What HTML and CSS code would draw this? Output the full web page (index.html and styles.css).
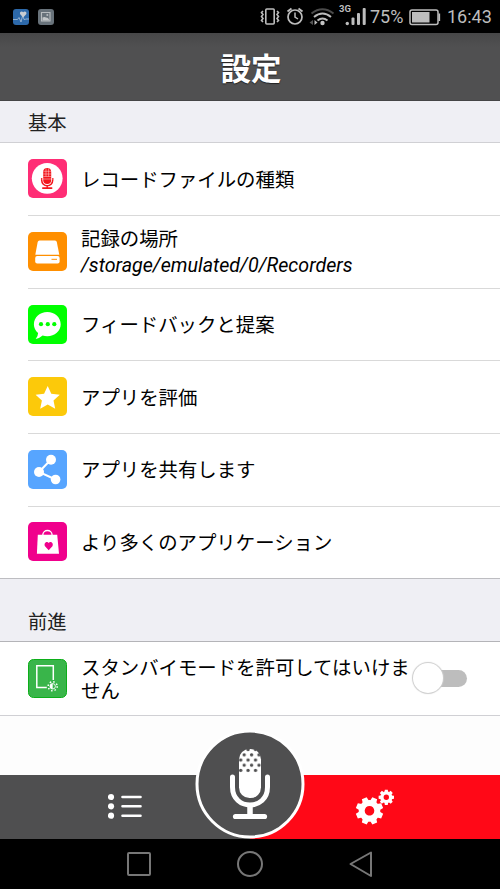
FILE: index.html
```html
<!DOCTYPE html>
<html lang="ja">
<head>
<meta charset="utf-8">
<title>設定</title>
<link rel="stylesheet" href="styles.css">
</head>
<body>
<div class="screen">
  <div class="status">
    <svg class="status-art" width="500" height="33" viewBox="0 0 500 33">
      <rect x="13" y="9" width="16" height="16" rx="3" fill="#2d69aa"/>
      <path d="M13 19.500h4.500l1.500-2 2 4.500 1.500-6 2 4 1-1h3.500" fill="none" stroke="#9fb9d5" stroke-width=".9"/>
      <path d="M23.200 17.500l-3-3.200c-1.200-2.300 1.700-4 3-2 1.300-2 4.300-.3 3 2z" fill="#c8cdd2"/>
      <rect x="38" y="9" width="16" height="16" rx="3" fill="#68727a"/>
      <path d="M41.500 12.500h8.500v8.500h-8.500z" fill="none" stroke="#b9bdc0" stroke-width="1.100"/>
      <path d="M42.500 20.500v-3l2-.5 1.500.5 2 .5 1.500 2.500z" fill="#c4c7c9"/>
      <circle cx="47.300" cy="15" r="1" fill="#b9bdc0"/>
      <g fill="none" stroke="#bdbdbd">
        <rect x="265.800" y="9" width="8.400" height="15" rx="1" stroke-width="1.600"/>
        <path d="M263 11l-1.500 1.500 1.500 2-1.500 2 1.500 2-1.500 2 1.500 1.500M277 11l1.500 1.500-1.500 2 1.500 2-1.500 2 1.500 2-1.500 1.500" stroke-width="1.600"/>
        <circle cx="295" cy="17" r="7" stroke-width="1.700"/>
        <path d="M295 12.500V17l3 2" stroke-width="1.500"/>
        <path d="M287.500 11.500l4-3M302.500 11.500l-4-3" stroke-width="1.800"/>
        <path d="M311.500 13.500q11-8.500 22 0" stroke="#4b4b4b" stroke-width="2"/>
        <path d="M314 17q8.500-7 17 0" stroke-width="2"/>
        <path d="M317.500 20.500q5-4 10 0" stroke-width="2"/>
      </g>
      <circle cx="322.500" cy="23" r="2.200" fill="#c4c4c4"/>
      <path d="M313 20v5l-3.500-2.500z" fill="#555"/><path d="M314.500 20v5l3-2.500z" fill="#bdbdbd"/>
      <g fill="#bdbdbd"><circle cx="347.300" cy="23.500" r="1.700"/><rect x="351.500" y="17.500" width="3" height="7.500" rx="1"/><rect x="357" y="13" width="3" height="12" rx="1"/><rect x="362.700" y="8" width="3" height="17" rx="1"/></g>
      <rect x="410" y="10" width="28" height="14.500" rx="2" fill="none" stroke="#bdbdbd" stroke-width="1.500"/>
      <rect x="412" y="12" width="17.500" height="10.500" fill="#bdbdbd"/>
      <path d="M439.300 13.500v7.500" stroke="#bdbdbd" stroke-width="1.700"/>
    </svg>
    <span class="net">3G</span><span class="percent">75%</span><span class="clock">16:43</span>
  </div>
  <header class="header">設定</header>
  <h2 class="section">基本</h2>
  <ul class="list">
    <li class="row">
      <svg class="icon" viewBox="0 0 39 39"><rect width="39" height="39" rx="5" fill="#ff2d75"/><circle cx="19.200" cy="19.300" r="15.400" fill="#fff"/><g fill="#f3161c"><rect x="15.200" y="9" width="8" height="16" rx="4"/><rect x="14" y="28.200" width="10.500" height="1.800" rx=".9"/></g><path d="M13.700 19v2.300a5.500 5.500 0 0 0 11 0V19M19.200 26.500v2.500" fill="none" stroke="#f3161c" stroke-width="1.500"/><path d="M15.500 12.300h7.500M15.300 15h8M15.300 17.500h8M13.500 20h11.500M18 9.500v8M20.600 9.500v8" stroke="#fff" stroke-opacity=".6" stroke-width=".7"/></svg>
      <span class="label">レコードファイルの種類</span>
    </li>
    <li class="row">
      <svg class="icon" viewBox="0 0 39 39"><rect width="39" height="39" rx="5" fill="#ff8f00"/><path d="M11.500 8.500h15.500q1.500 0 1.800 1.500l2.500 12.700h-24L9.700 10q.3-1.500 1.800-1.500z" fill="#fff"/><rect x="7.200" y="24" width="24.400" height="7.500" rx="2" fill="#fff"/><path d="M23.500 27.300h5.500" stroke="#ff8f00"/></svg>
      <span class="label two">記録の場所<br><i class="path">/storage/emulated/0/Recorders</i></span>
    </li>
    <li class="row">
      <svg class="icon" viewBox="0 0 39 39"><rect width="39" height="39" rx="5" fill="#0f0"/><path d="M19.300 7c7.500 0 13.400 5.300 13.400 12.200s-6 12-13.400 12c-1.800 0-3.200-.2-4.700-.7Q11.500 33.300 7.700 34q2.200-2.300 2.400-6C7.400 25.800 5.900 22.500 5.900 19.200 5.900 12.300 11.900 7 19.300 7z" fill="#fff"/><g fill="#0f0"><circle cx="13" cy="19.200" r="2.100"/><circle cx="19.800" cy="19.200" r="2.100"/><circle cx="26.300" cy="19.200" r="2.100"/></g></svg>
      <span class="label">フィードバックと提案</span>
    </li>
    <li class="row">
      <svg class="icon" viewBox="0 0 39 39"><rect width="39" height="39" rx="5" fill="#fcc90a"/><path d="M19.700 9l3.600 7.800 8.500 1-6.300 5.700 1.700 8.300-7.500-4.200-7.500 4.200 1.700-8.300-6.300-5.700 8.500-1z" fill="#fff"/></svg>
      <span class="label">アプリを評価</span>
    </li>
    <li class="row">
      <svg class="icon" viewBox="0 0 39 39"><rect width="39" height="39" rx="5" fill="#57a5ff"/><path d="M23 9.500L11 22l16.500 7.500" fill="none" stroke="#fff" stroke-width="2"/><g fill="#fff"><circle cx="23" cy="9.700" r="5"/><circle cx="11" cy="22" r="5"/><circle cx="27.600" cy="29.500" r="4.800"/></g></svg>
      <span class="label">アプリを共有します</span>
    </li>
    <li class="row">
      <svg class="icon" viewBox="0 0 39 39"><rect width="39" height="39" rx="5" fill="#f0008c"/><path d="M9.800 12.800h19.400l1.800 19H8.900z" fill="#fff"/><path d="M14.800 13c0-6 9.300-6 9.300 0" fill="none" stroke="#fff" stroke-width="1.300"/><path d="M20.700 28.300l-3.700-4c-1.800-3.500 2.300-5.700 3.700-3.400 1.400-2.300 5.500-.1 3.700 3.400z" fill="#f0008c"/></svg>
      <span class="label">より多くのアプリケーション</span>
    </li>
  </ul>
  <h2 class="section later">前進</h2>
  <div class="row standby">
    <svg class="icon" viewBox="0 0 39 39"><rect x=".5" y=".5" width="38" height="38" rx="5" fill="#39b54a" stroke="#0cae19"/><path d="M25.300 21V6.700H8.800v21.700h10" fill="none" stroke="#fff" stroke-width="1.500"/><circle cx="24.700" cy="27.300" r="4.500" fill="none" stroke="#fff" stroke-width="1.500" stroke-dasharray="1.500 2.030"/><circle cx="24.700" cy="27.300" r="2.700" fill="none" stroke="#fff" stroke-width=".9"/><path d="M24.700 24.600a2.700 2.700 0 0 0 0 5.400z" fill="#fff"/></svg>
    <span class="label wrap">スタンバイモードを許可してはいけません</span>
    <span class="switch"><span class="thumb"></span></span>
  </div>
  <div class="spacer"></div>
  <footer class="tabs">
    <div class="tab list-tab"><svg width="34" height="27" viewBox="0 0 34 27"><g fill="#fff"><circle cx="3" cy="4" r="3.100"/><circle cx="3" cy="13.300" r="3.100"/><circle cx="3" cy="22.700" r="3.100"/></g><path d="M14.500 4h18M14.500 13.300h18M14.500 22.700h18" stroke="#fff" stroke-width="2.600" stroke-linecap="round"/></svg></div>
    <div class="tab gear-tab"><svg width="40" height="36" viewBox="0 0 40 36">
      <defs><g id="gear"><circle r="7.800" fill="none" stroke="#fff" stroke-width="6"/><g id="teeth"><path id="tooth" d="M-3.300-9.500l.7-4.200h5.200l.7 4.200zM-3.300 9.500l.7 4.200h5.200l.7-4.200z" fill="#fff"/><use href="#tooth" transform="rotate(90)"/></g><use href="#teeth" transform="rotate(45)"/></g></defs>
      <use href="#gear" transform="translate(14.500 21.800) rotate(22.500)"/><use href="#gear" transform="translate(31.300 8.300) scale(.56)"/>
    </svg></div>
    <div class="record"><svg width="110" height="110" viewBox="0 0 110 110">
      <defs><pattern id="dots" x="44" y="22" width="7.400" height="10.400" patternUnits="userSpaceOnUse"><circle cx="5.200" cy="2.800" r="1.700" fill="#4f4f50"/><circle cx="1.700" cy="8" r="1.700" fill="#4f4f50"/></pattern></defs>
      <circle cx="55" cy="54" r="53" fill="#4f4f50" stroke="#fff" stroke-width="3"/>
      <rect x="44" y="19" width="22" height="49" rx="10.500" fill="#fff"/>
      <path d="M44 42.500V29.500a10.500 10.500 0 0 1 22 0v13z" fill="url(#dots)"/>
      <path d="M37.500 47v10c0 24 35 24 35 0V47" fill="none" stroke="#fff" stroke-width="5" stroke-linecap="round"/>
      <path d="M55 75v11" stroke="#fff" stroke-width="5.500"/><path d="M40.500 86.500h29" stroke="#fff" stroke-width="5.200" stroke-linecap="round"/>
    </svg></div>
  </footer>
  <nav class="nav">
    <svg width="28" height="28" viewBox="0 0 28 28"><rect x="3" y="3" width="22" height="22" rx="1"/></svg>
    <svg width="28" height="28" viewBox="0 0 28 28"><circle cx="14" cy="14" r="12"/></svg>
    <svg width="28" height="28" viewBox="0 0 28 28"><path d="M3.500 14L24 2.500v23.500z"/></svg>
  </nav>
</div>
</body>
</html>
```
FILE: styles.css
```css
* { box-sizing: border-box; }
body { margin: 0; background: #fdfdfd; color: #000; font-family: Roboto, "Noto Sans CJK JP", sans-serif; }
.screen { display: flex; flex-direction: column; width: 500px; height: 889px; overflow: hidden; }
.status { position: relative; flex: none; height: 33px; background: #000; color: #bdbdbd; }
.status-art { display: block; }
.net, .percent, .clock { position: absolute; line-height: 20px; white-space: nowrap; }
.net { left: 339px; top: -1px; font-size: 9.500px; font-weight: 700; }
.percent { left: 370px; top: 7px; font-size: 18px; }
.clock { left: 447px; top: 7px; font-size: 18px; }
.header { flex: none; height: 68.400px; background: linear-gradient(#474748, #505051 14px); border-bottom: 1px solid #454546; color: #fff; font: 700 30.500px/69px "Noto Sans CJK JP", sans-serif; text-align: center; text-indent: 2px; text-shadow: 0 1px 1px #222; }
.section { flex: none; height: 41.200px; margin: 0; padding-left: 28px; background: #efeff4; border-bottom: 1px solid #d0d0d4; color: #222; font: 400 19.300px/42px "Noto Sans CJK JP", sans-serif; }
.list { flex: none; margin: 0; padding: 0; list-style: none; border-bottom: 1px solid #bdbdc1; }
.row { display: flex; align-items: center; height: 72.600px; padding-left: 28px; background: #fff; }
.row + .row { background: linear-gradient(#d9d9d9, #d9d9d9) 28px 0 / 100% 1px no-repeat #fff; }
.icon { flex: none; width: 39px; height: 39px; }
.label { margin-left: 14px; font: 400 19.400px/24px "Noto Sans CJK JP", sans-serif; white-space: nowrap; }
.two { line-height: 26px; padding-top: 2px; }
.path { font-family: Roboto, sans-serif; font-size: 19.650px; }
.wrap { width: 331px; line-height: 23px; white-space: normal; }
.later { height: 63px; padding-top: 21px; border-bottom-color: #b4b4b8; }
.standby { flex: none; height: 73.400px; border-bottom: 1px solid #d0d0d4; }
.switch { position: relative; flex: none; width: 55px; height: 17px; border-radius: 9px; background: linear-gradient(90deg, transparent 15px, #bdbdbd 15px); }
.thumb { position: absolute; left: 1px; top: -7px; width: 30px; height: 30px; border-radius: 50%; background: #fff; box-shadow: 0 0 1px 1px #ccc; }
.spacer { flex: 1; background: #fdfdfd; }
.tabs { position: relative; flex: none; display: flex; height: 64px; }
.tab { flex: 0 0 250px; }
.list-tab { padding: 18px 0 0 108px; background: #4f4f50; }
.gear-tab { padding: 14px 0 0 105px; background: #ff0817; }
.record { position: absolute; left: 195px; top: -45px; width: 110px; height: 109px; overflow: hidden; }
.nav { flex: none; display: flex; justify-content: center; gap: 83px; height: 50px; padding-top: 11px; background: #000; }
.nav svg { fill: none; stroke: #777; stroke-width: 2; stroke-linejoin: round; }
```
